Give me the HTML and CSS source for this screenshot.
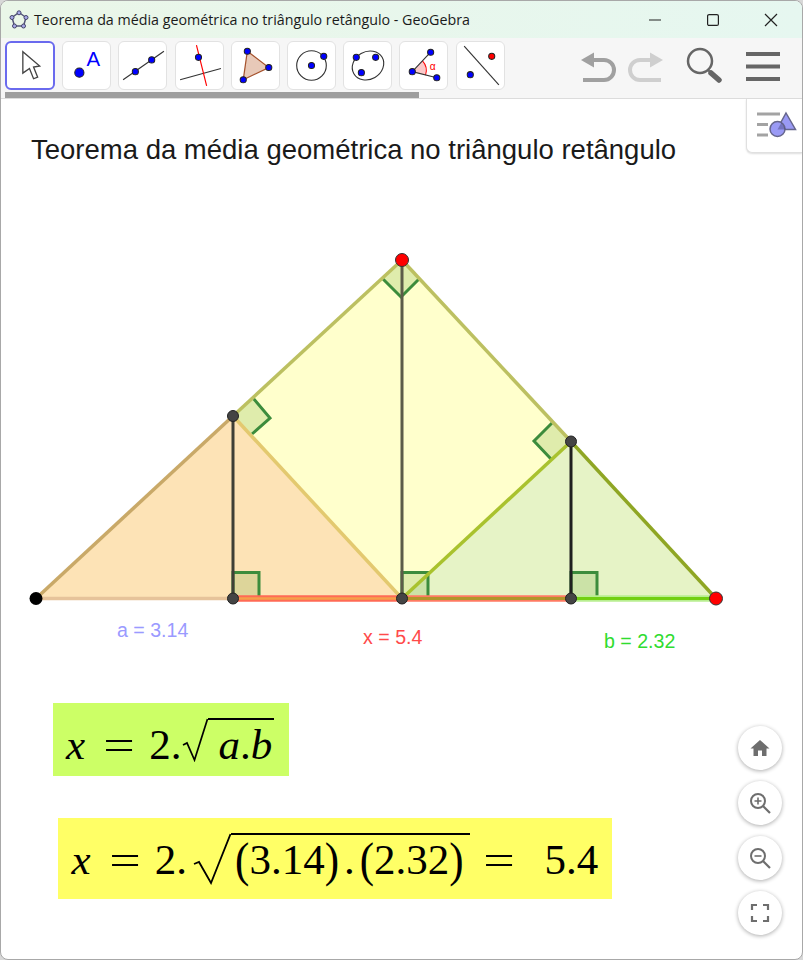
FILE: index.html
```html
<!DOCTYPE html>
<html lang="pt">
<head>
    <meta charset="UTF-8">
    <meta name="viewport" content="width=device-width, initial-scale=1.0">
    <title>Teorema da média geométrica no triângulo retângulo - GeoGebra</title>
    <link rel="stylesheet" href="styles.css">
</head>
<body>
  <div class="window">

    <!-- title bar -->
    <header class="titlebar">
      <svg class="app-icon" width="20" height="20" viewBox="0 0 20 20">
        <path d="M10 2.5L17 7.5L14.5 16L5.500 16L3 7.500Z" fill="none" stroke="#55557a" stroke-width="1.500"/>
        <g fill="#a9a9e8" stroke="#44446a" stroke-width="1">
          <circle cx="10" cy="2.800" r="2"/>
          <circle cx="17" cy="7.500" r="2"/>
          <circle cx="14.500" cy="16" r="2"/>
          <circle cx="5.500" cy="16" r="2"/>
          <circle cx="3" cy="7.500" r="2"/>
        </g>
      </svg>
      <span class="window-title">Teorema da média geométrica no triângulo retângulo - GeoGebra</span>
      <div class="window-controls">
        <svg width="14" height="14" viewBox="0 0 14 14"><path d="M1 7H13" stroke="#222" stroke-width="1.200"/></svg>
        <svg width="14" height="14" viewBox="0 0 14 14"><rect x="1.600" y="1.600" width="10.800" height="10.800" rx="1.500" fill="none" stroke="#222" stroke-width="1.200"/></svg>
        <svg width="14" height="14" viewBox="0 0 14 14"><path d="M1 1L13 13M13 1L1 13" stroke="#222" stroke-width="1.200"/></svg>
      </div>
    </header>

    <!-- tools -->
    <nav class="toolbar">
      <div class="tools">
        <button class="tool tool-active">
          <svg viewBox="0 0 48 48"><path d="M16.500 10.500V31.500L23 27L27 37L31 35.500L27 25.500L33 24.500Z" fill="#fff" stroke="#444" stroke-width="1.300"/></svg>
        </button>
        <button class="tool">
          <svg viewBox="0 0 48 48"><circle cx="17" cy="31" r="4.500" fill="#00f" stroke="#222"/><text x="24" y="24" class="tool-letter">A</text></svg>
        </button>
        <button class="tool">
          <svg viewBox="0 0 48 48"><path d="M5 38L45 10" stroke="#333" stroke-width="1.100"/><circle cx="17" cy="30" r="3" fill="#00f" stroke="#222"/><circle cx="33" cy="18.500" r="3" fill="#00f" stroke="#222"/></svg>
        </button>
        <button class="tool">
          <svg viewBox="0 0 48 48"><path d="M5 38L45 27" stroke="#333" stroke-width="1.100"/><path d="M21 4L31 44" stroke="#f00" stroke-width="1.100"/><circle cx="23" cy="16" r="3" fill="#00f" stroke="#222"/></svg>
        </button>
        <button class="tool">
          <svg viewBox="0 0 48 48"><path d="M16 10L37 26L12 38Z" fill="#e8c9b8" stroke="#a5522d" stroke-width="1.200"/><circle cx="16" cy="10" r="3" fill="#00f" stroke="#222"/><circle cx="37" cy="26" r="3" fill="#00f" stroke="#222"/><circle cx="12" cy="38" r="3" fill="#00f" stroke="#222"/></svg>
        </button>
        <button class="tool">
          <svg viewBox="0 0 48 48"><circle cx="24" cy="24" r="14.500" fill="none" stroke="#333" stroke-width="1.100"/><circle cx="24" cy="24" r="3" fill="#00f" stroke="#222"/><circle cx="36" cy="15" r="3" fill="#00f" stroke="#222"/></svg>
        </button>
        <button class="tool">
          <svg viewBox="0 0 48 48"><ellipse cx="24.500" cy="24" rx="16" ry="13.500" transform="rotate(-30 24.500 24)" fill="none" stroke="#333" stroke-width="1.100"/><circle cx="13" cy="16" r="3" fill="#00f" stroke="#222"/><circle cx="32" cy="16" r="3" fill="#00f" stroke="#222"/><circle cx="18" cy="31" r="3" fill="#00f" stroke="#222"/></svg>
        </button>
        <button class="tool">
          <svg viewBox="0 0 48 48"><path d="M13 30L23 19.500A14 14 0 0 1 26 33.500Z" fill="#fbc9c9"/><path d="M23 19.500A14 14 0 0 1 26 33.500" fill="none" stroke="#f00"/><path d="M31 11L13 30L37 36" fill="none" stroke="#333" stroke-width="1.100"/><circle cx="31" cy="11" r="3" fill="#00f" stroke="#222"/><circle cx="13" cy="30" r="3" fill="#00f" stroke="#222"/><circle cx="37" cy="36" r="3" fill="#00f" stroke="#222"/><text x="30" y="28" class="tool-alpha">α</text></svg>
        </button>
        <button class="tool">
          <svg viewBox="0 0 48 48"><path d="M8 5L42 43" stroke="#333" stroke-width="1.100"/><circle cx="35" cy="15" r="3" fill="#f00" stroke="#222"/><circle cx="14" cy="33" r="3" fill="#00f" stroke="#222"/></svg>
        </button>
      </div>
      <div class="toolbar-scroll"></div>
      <div class="actions">
        <svg width="40" height="36" viewBox="0 0 40 36">
          <path d="M10 12H25a10 10 0 0 1 0 20H4" fill="none" stroke="#a0a0a0" stroke-width="4"/>
          <path d="M2 12L15 4.500V19.500Z" fill="#a0a0a0"/>
        </svg>
        <svg width="40" height="36" viewBox="0 0 40 36">
          <path d="M30 12H15a10 10 0 0 0 0 20H36" fill="none" stroke="#cfcfcf" stroke-width="4"/>
          <path d="M38 12L25 4.500V19.500Z" fill="#cfcfcf"/>
        </svg>
        <svg width="40" height="40" viewBox="0 0 40 40">
          <circle cx="15" cy="15" r="12" fill="none" stroke="#666" stroke-width="2.500"/>
          <path d="M23 24L26 27" stroke="#666" stroke-width="2"/>
          <path d="M26 27L34 34" stroke="#666" stroke-width="5.500" stroke-linecap="round"/>
        </svg>
        <svg width="36" height="36" viewBox="0 0 36 36">
          <path d="M1 6H35M1 18.500H35M1 31H35" stroke="#666" stroke-width="4"/>
        </svg>
      </div>
    </nav>

    <!-- graphics view -->
    <main class="canvas">
      <svg class="drawing" width="803" height="861" viewBox="0 99 803 861">
        <polygon points="36,598.500 402,260 716,598.500" fill="#ffffcc"/>
        <polygon points="36,598.500 233,416 402,598.500" fill="#fde3b6"/>
        <polygon points="402,598.500 571,441.500 716,598.500" fill="#e6f3c6"/>

        <!-- right angle marks -->
        <g fill="#5f9f2f" fill-opacity=".2" stroke="#3c8c3c" stroke-width="3">
          <path d="M402 297L383 279L402 260L419 279Z" stroke="none"/>
          <path d="M383 279L401 297L419 279" fill="none"/>
          <path d="M233 416L253 397L270 416L252 434Z" stroke="none"/>
          <path d="M253 398L270 418L252 434" fill="none"/>
          <path d="M571 441.500L552 422L534 442L552 460Z" stroke="none"/>
          <path d="M552 423L534 441L551 459" fill="none"/>
          <path d="M233 598.500V572.500H259V598.500Z"/>
          <path d="M402 598.500V572.500H428V598.500Z"/>
          <path d="M571 598.500V572.500H597V598.500Z"/>
        </g>

        <!-- sides -->
        <g fill="none" stroke-width="3.500">
          <path d="M233 416L402 260" stroke="#bcc061"/>
          <path d="M402 260L571 441.500" stroke="#bcc061"/>
          <path d="M36 598.500L233 416" stroke="#c9a968"/>
          <path d="M233 416L402 598.500" stroke="#e3c96f"/>
          <path d="M402 598.500L571 441.500" stroke="#a9c22e"/>
          <path d="M571 441.500L716 598.500" stroke="#8fa624"/>
          <path d="M36 598.500H233" stroke="#e6c39a"/>
        </g>

        <!-- base segments -->
        <path d="M233 598.500H402" stroke="#ff6a55" stroke-width="6.500"/>
        <path d="M233 598.500H402" stroke="#f5a04a" stroke-width="2.500"/>
        <path d="M402 598.500H571" stroke="#ff7a62" stroke-width="6.500"/>
        <path d="M402 598.500H571" stroke="#b0952a" stroke-width="3"/>
        <path d="M571 598.500H716" stroke="#b8ee90" stroke-width="6.500"/>
        <path d="M571 598.500H716" stroke="#72cf12" stroke-width="3"/>

        <!-- altitudes -->
        <path d="M233 416V598" stroke="#3f3f36" stroke-width="3"/>
        <path d="M402 260V598" stroke="#5c5c48" stroke-width="3"/>
        <path d="M571 441V598" stroke="#1f1f1f" stroke-width="3"/>

        <!-- points -->
        <circle cx="36" cy="598.500" r="6.500" fill="#000"/>
        <circle cx="233" cy="598.500" r="5.500" fill="#444" stroke="#222"/>
        <circle cx="402" cy="598.500" r="5.500" fill="#444" stroke="#222"/>
        <circle cx="571" cy="598.500" r="5.500" fill="#444" stroke="#222"/>
        <circle cx="233" cy="416" r="5.500" fill="#444" stroke="#222"/>
        <circle cx="571" cy="441.500" r="5.500" fill="#444" stroke="#222"/>
        <circle cx="402" cy="260" r="6.500" fill="#f00" stroke="#333"/>
        <circle cx="716" cy="598.500" r="6.500" fill="#f00" stroke="#333"/>

        <text x="117" y="637" class="label label-a">a = 3.14</text>
        <text x="363" y="644" class="label label-x">x = 5.4</text>
        <text x="604" y="648" class="label label-b">b = 2.32</text>
      </svg>

      <h1 class="heading">Teorema da média geométrica no triângulo retângulo</h1>

      <div class="formula formula-lime">
        <i>x</i><span class="eq">=</span><span>2.</span>
        <span class="root">
          <svg class="radical" width="26" height="44" viewBox="0 0 26 44"><path d="M1 27L5 25L12.500 42L25.500 1" fill="none" stroke="#000" stroke-width="1.700"/></svg>
          <span class="radicand"><i>a</i>.<i>b</i></span>
        </span>
      </div>

      <div class="formula formula-yellow">
        <i>x</i><span class="eq">=</span><span>2.</span>
        <span class="root root-long">
          <svg class="radical" width="38" height="52" viewBox="0 0 38 52"><path d="M1 31L6 29L18 50L37.500 1" fill="none" stroke="#000" stroke-width="1.800"/></svg>
          <span class="radicand radicand-long"><span class="paren">(</span>3.14<span class="paren">)</span><span class="dot">.</span><span class="paren">(</span>2.32<span class="paren">)</span></span>
        </span>
        <span class="eq eq-end">=</span><span class="result">5.4</span>
      </div>

      <!-- style bar toggle -->
      <button class="stylebar-btn">
        <svg width="44" height="34" viewBox="0 0 44 34">
          <path d="M4 3H27M4 13.500H15M4 24H15" stroke="#a3a3a3" stroke-width="3"/>
          <path d="M33 2L42.500 18.500H24Z" fill="#9a9af5" stroke="#66668c" stroke-width="1.500"/>
          <circle cx="24.500" cy="18" r="7.500" fill="#9a9af5" stroke="#66668c" stroke-width="1.500"/>
          <path d="M28.500 11.500L33 18.500H24.500Z" fill="#44447a" fill-opacity=".45"/>
        </svg>
      </button>

      <!-- zoom panel -->
      <div class="zoom-panel">
        <button class="zoom-btn">
          <svg width="22" height="22" viewBox="0 0 22 22"><path d="M11 3L1.500 11.500H4.500V19H9V13.500H13V19H17.500V11.500H20.500Z" fill="#6e6e6e"/></svg>
        </button>
        <button class="zoom-btn">
          <svg width="24" height="24" viewBox="0 0 24 24"><circle cx="10" cy="10" r="7" fill="none" stroke="#6e6e6e" stroke-width="2"/><path d="M15 15L22 22" stroke="#6e6e6e" stroke-width="2.200"/><path d="M10 6.500V13.500M6.500 10H13.500" stroke="#6e6e6e" stroke-width="1.600"/></svg>
        </button>
        <button class="zoom-btn">
          <svg width="24" height="24" viewBox="0 0 24 24"><circle cx="10" cy="10" r="7" fill="none" stroke="#6e6e6e" stroke-width="2"/><path d="M15 15L22 22" stroke="#6e6e6e" stroke-width="2.200"/><path d="M6.500 10H13.500" stroke="#6e6e6e" stroke-width="1.600"/></svg>
        </button>
        <button class="zoom-btn">
          <svg width="20" height="20" viewBox="0 0 20 20"><path d="M2 7V2H7M13 2H18V7M18 13V18H13M7 18H2V13" fill="none" stroke="#6e6e6e" stroke-width="2.200"/></svg>
        </button>
      </div>
    </main>
  </div>
</body>
</html>
```

FILE: styles.css
```css
*, *::before, *::after {
  box-sizing: border-box;
}

html, body {
  height: 100%;
  margin: 0;
}

body {
  overflow: hidden;
  background-color: #d8d8d8;
  font-family: 'Liberation Sans', sans-serif;
}

.window {
  display: flex;
  flex-direction: column;
  height: 960px;
  overflow: hidden;
  border: 1px solid #a8a8a8;
  border-radius: 8px;
  background-color: #fff;
}

.titlebar {
  display: flex;
  flex: none;
  align-items: center;
  height: 37px;
  padding-left: 8px;
  background: linear-gradient(to right, #eaf6e8, #e6f7f0);
}

.app-icon {
  flex: none;
}

.window-title {
  margin-left: 5px;
  color: #1a1a1a;
  font: 14.27px 'Open Sans', sans-serif;
  white-space: nowrap;
}

.window-controls {
  display: flex;
  gap: 44px;
  margin-left: auto;
  padding-right: 24px;
}

.toolbar {
  position: relative;
  display: flex;
  flex: none;
  align-items: flex-start;
  justify-content: space-between;
  height: 61px;
  padding: 3px 21px 0 4px;
  border-bottom: 1px solid #dcdcdc;
  background-color: #f6f6f6;
}

.tools {
  display: flex;
  gap: 7.2px;
}

.tool {
  width: 49px;
  height: 49px;
  padding: 0;
  border: 1px solid #e2e2e2;
  border-radius: 6px;
  background-color: #fff;
}

.tool svg {
  display: block;
  width: 49px;
  height: 49px;
  margin: -1px;
}

.tool-active {
  width: 50px;
  border: 2px solid #6a6aee;
}

.tool-active svg {
  margin: -2px -1px;
}

.tool-letter {
  fill: #00f;
  font-size: 20px;
}

.tool-alpha {
  fill: #f00;
  font-size: 10px;
}

.toolbar-scroll {
  position: absolute;
  left: 4px;
  bottom: 0;
  width: 414px;
  height: 6px;
  background-color: #9e9e9e;
}

.actions {
  display: flex;
  align-items: center;
  gap: 5px;
  padding-top: 5px;
}

.actions svg:nth-child(1) {
  margin-right: 1px;
}

.actions svg:nth-child(2) {
  margin-right: 15px;
}

.actions svg:nth-child(3) {
  margin-right: 15px;
}

.canvas {
  position: relative;
  flex: 1;
}

.drawing {
  position: absolute;
  top: 0;
  left: -1px;
}

.label {
  font-size: 19.6px;
}

.label-a {
  fill: #9a9aff;
}

.label-x {
  fill: #ff4a4a;
}

.label-b {
  fill: #2fdc2f;
}

.heading {
  position: absolute;
  top: 35px;
  left: 30px;
  margin: 0;
  color: #1a1a1a;
  font-size: 27.5px;
  font-weight: normal;
  white-space: nowrap;
}

/* formulas: margins line the pieces up with the typeset original */
.formula {
  position: absolute;
  display: flex;
  align-items: flex-end;
  color: #000;
  font: 43px/1 'Liberation Serif', serif;
  white-space: pre;
}

.formula-lime {
  top: 604px;
  left: 52px;
  width: 236px;
  height: 73px;
  padding: 0 0 10px 13px;
  background-color: #ccff66;
}

.formula-yellow {
  top: 719px;
  left: 57px;
  width: 554px;
  height: 81px;
  padding: 0 0 18px 13.5px;
  background-color: #ffff66;
}

.eq {
  display: inline-block;
  margin: 0 18px 0 22px;
  transform: scaleX(1.3);
}

.eq-end {
  margin-left: 17px;
}

.root {
  display: flex;
  align-items: flex-end;
}

.root-long {
  margin-left: 6px;
}

.radical {
  flex: none;
  margin-bottom: 4px;
}

.root-long .radical {
  margin-bottom: -4px;
}

.radicand {
  height: 48px;
  padding: 3px 2px 0 11px;
  border-top: 2px solid #000;
}

.radicand-long {
  padding: 3px 6.5px 0 4px;
}

.paren {
  display: inline-block;
  transform: scaleY(1.12);
}

.dot {
  margin: 0 5px;
}

.result {
  margin-left: 15px;
}

.stylebar-btn {
  position: absolute;
  top: 0;
  right: 0;
  width: 56px;
  height: 54px;
  padding: 8px 0 0;
  border: solid #e0e0e0;
  border-width: 0 0 1px 1px;
  border-bottom-left-radius: 6px;
  background-color: #fff;
  box-shadow: 0 1px 2px #0002;
}

.zoom-panel {
  position: absolute;
  right: 20px;
  bottom: 24px;
  display: flex;
  flex-direction: column;
  gap: 11px;
}

.zoom-btn {
  display: flex;
  align-items: center;
  justify-content: center;
  width: 44px;
  height: 44px;
  padding: 0;
  border: none;
  border-radius: 50%;
  background-color: #fff;
  box-shadow: 0 1px 4px #0005;
}
```
